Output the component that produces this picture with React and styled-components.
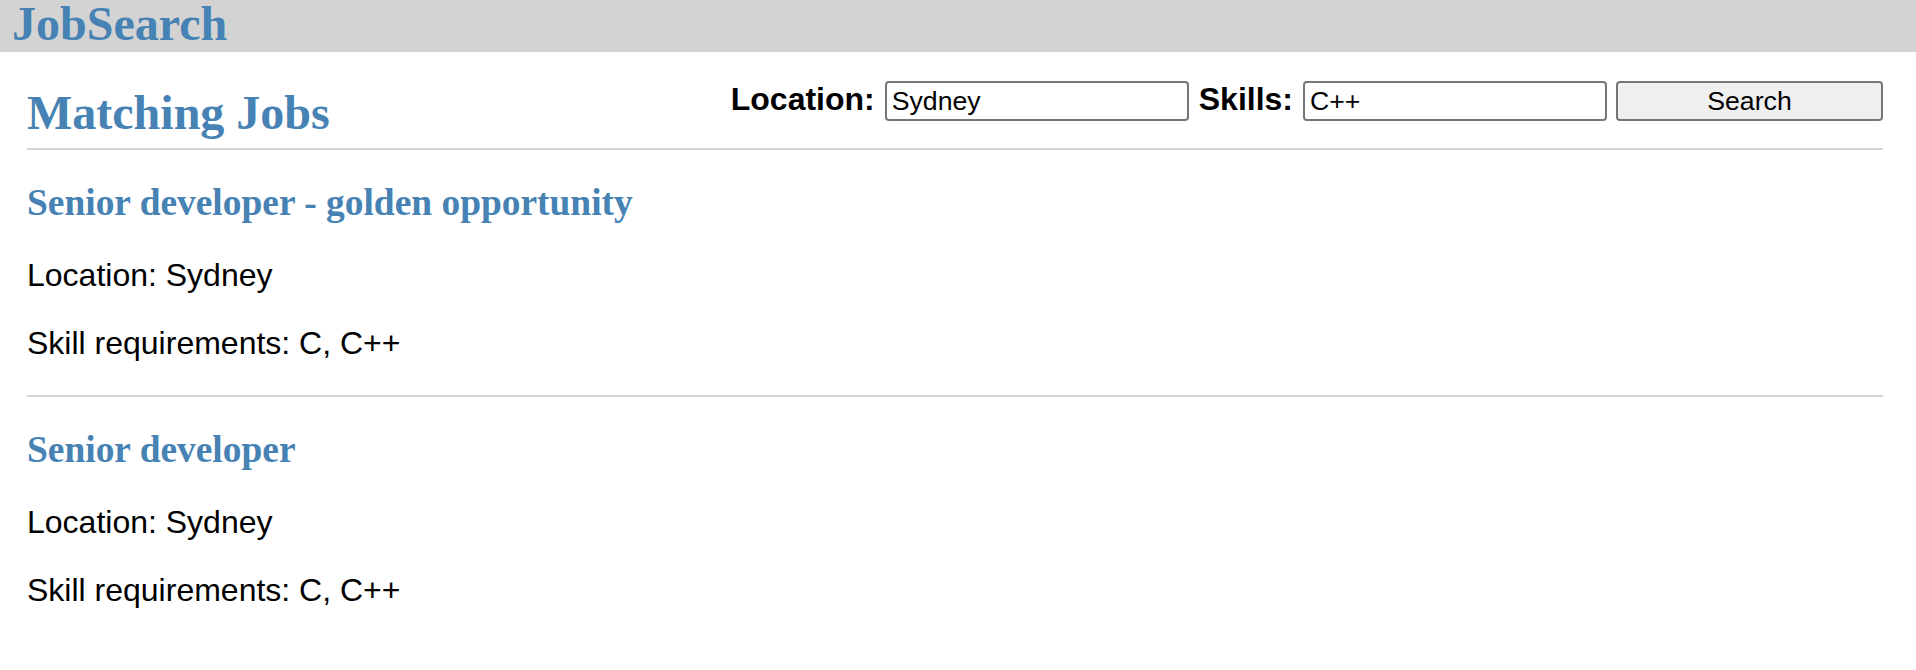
import React from "react";
import styled, { createGlobalStyle } from "styled-components";

const GlobalStyle = createGlobalStyle`
  html, body {
    margin: 0;
    padding: 0;
    background: #ffffff;
  }
  body {
    font-family: "Liberation Sans", Arial, sans-serif;
    color: #000000;
  }
  * { box-sizing: border-box; }
`;

const Header = styled.header`
  height: 52px;
  background: #d3d3d3;
  padding-left: 12px;
  display: flex;
  align-items: flex-start;
`;

const Brand = styled.h1`
  margin: 0;
  font-family: "Liberation Serif", "Times New Roman", serif;
  font-weight: 700;
  font-size: 48px;
  line-height: 48px;
  color: #4682b4;
`;

const Main = styled.main`
  padding: 0 33px 0 27px;
`;

const TopRow = styled.div`
  display: flex;
  justify-content: space-between;
  align-items: flex-start;
  padding-bottom: 8px;
  border-bottom: 2px solid #d3d3d3;
`;

const PageTitle = styled.h2`
  margin: 33px 0 0;
  font-family: "Liberation Serif", "Times New Roman", serif;
  font-weight: 700;
  font-size: 48px;
  line-height: 55px;
  color: #4682b4;
`;

const SearchForm = styled.form`
  display: flex;
  align-items: baseline;
  margin-top: 29px;
`;

const Label = styled.label`
  font-weight: 700;
  font-size: 32px;
  line-height: 37px;
  margin: 0 10px 0 ${(p) => (p.$first ? "0" : "10px")};
`;

const TextInput = styled.input`
  width: 304px;
  height: 40px;
  border: 2px solid #767676;
  border-radius: 4px;
  padding: 1px 5px 0;
  font-family: "Liberation Sans", Arial, sans-serif;
  font-size: 26.67px;
  color: #000000;
  background: #ffffff;
  outline: none;
`;

const SearchButton = styled.button`
  width: 267px;
  height: 40px;
  margin-left: 9px;
  border: 2px solid #767676;
  border-radius: 4px;
  background: #efefef;
  font-family: "Liberation Sans", Arial, sans-serif;
  font-size: 26.67px;
  color: #000000;
  padding: 1px 0 0;
`;

const JobList = styled.section``;

const Job = styled.article`
  display: flex;
  flex-direction: column;
  padding: 32px 0 34px;
  & + & {
    border-top: 2px solid #d3d3d3;
  }
`;

const JobTitle = styled.h3`
  margin: 0 0 33px;
  font-family: "Liberation Serif", "Times New Roman", serif;
  font-weight: 700;
  font-size: 37.44px;
  line-height: 42px;
  color: #4682b4;
`;

const Detail = styled.p`
  margin: 0;
  font-size: 32px;
  line-height: 36px;
  & + & {
    margin-top: 32px;
  }
`;

const jobs = [
  { title: "Senior developer - golden opportunity", location: "Sydney", skills: "C, C++" },
  { title: "Senior developer", location: "Sydney", skills: "C, C++" },
];

export default function App() {
  return (
    <>
      <GlobalStyle />
      <Header>
        <Brand>JobSearch</Brand>
      </Header>
      <Main>
        <TopRow>
          <PageTitle>Matching Jobs</PageTitle>
          <SearchForm onSubmit={(e) => e.preventDefault()}>
            <Label $first htmlFor="loc">Location:</Label>
            <TextInput id="loc" defaultValue="Sydney" />
            <Label htmlFor="skills">Skills:</Label>
            <TextInput id="skills" defaultValue="C++" />
            <SearchButton type="submit">Search</SearchButton>
          </SearchForm>
        </TopRow>
        <JobList>
          {jobs.map((job, i) => (
            <Job key={i}>
              <JobTitle>{job.title}</JobTitle>
              <Detail>Location: {job.location}</Detail>
              <Detail>Skill requirements: {job.skills}</Detail>
            </Job>
          ))}
        </JobList>
      </Main>
    </>
  );
}
